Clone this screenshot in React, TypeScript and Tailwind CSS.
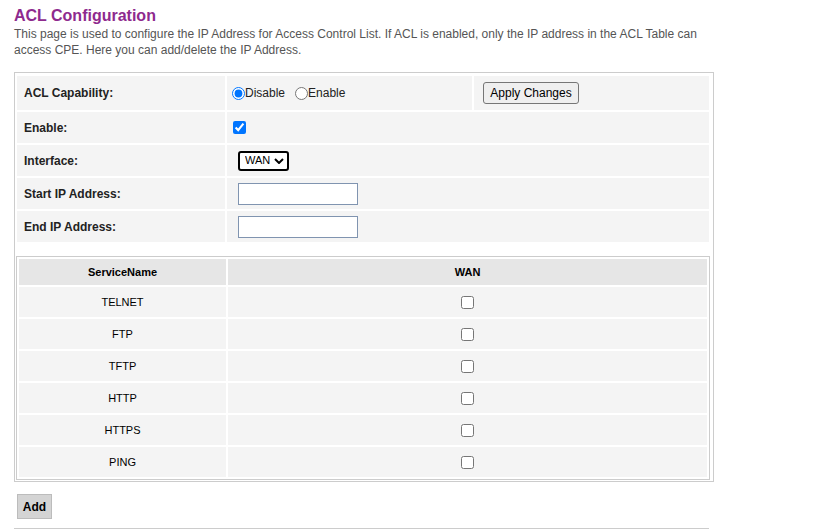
import React from "react";

const services = ["TELNET", "FTP", "TFTP", "HTTP", "HTTPS", "PING"];

export default function App() {
  return (
    <div className="min-h-screen bg-white pl-[14px] pt-[6px] font-['Liberation_Sans',Arial,sans-serif]">
      {/* Page heading */}
      <h1 className="text-[16px] leading-[20px] font-bold text-[#8e2a8e]">ACL Configuration</h1>
      <p className="w-[700px] text-[12px] leading-[16px] text-[#555]">
        This page is used to configure the IP Address for Access Control List. If ACL is enabled, only the IP address in
        the ACL Table can access CPE. Here you can add/delete the IP Address.
      </p>

      {/* Settings box */}
      <div className="mt-[14px] w-[700px] border border-[#cccccc] py-px">
        <table className="w-[696px] table-fixed border-separate border-spacing-[2px] text-[12px] text-[#222]">
          <colgroup>
            <col className="w-[208px]" />
            <col className="w-[245px]" />
            <col />
          </colgroup>
          <tbody>
            <tr>
              <td className="h-[34px] bg-[#f4f4f4] p-0 pl-[7px] font-bold">ACL Capability:</td>
              <td className="h-[34px] bg-[#f4f4f4] p-0">
                <div className="flex items-center">
                  <input type="radio" name="acl" defaultChecked className="m-0 ml-[5px] h-[13px] w-[13px]" />
                  <span>Disable</span>
                  <input type="radio" name="acl" className="m-0 ml-[10px] h-[13px] w-[13px]" />
                  <span>Enable</span>
                </div>
              </td>
              <td className="h-[34px] bg-[#f4f4f4] p-0 pl-[9px]">
                <button className="h-[22px] w-[96px] rounded-[3px] border border-[#767676] bg-[#efefef] text-[12px] text-black">
                  Apply Changes
                </button>
              </td>
            </tr>
            <tr>
              <td className="h-[31px] bg-[#f4f4f4] p-0 pl-[7px] font-bold">Enable:</td>
              <td colSpan={2} className="h-[31px] bg-[#f4f4f4] p-0">
                <div className="flex items-center">
                  <input type="checkbox" defaultChecked className="m-0 ml-[6px] h-[13px] w-[13px]" />
                </div>
              </td>
            </tr>
            <tr>
              <td className="h-[31px] bg-[#f4f4f4] p-0 pl-[7px] font-bold">Interface:</td>
              <td colSpan={2} className="h-[31px] bg-[#f4f4f4] p-0">
                <div className="relative ml-[11px] inline-block align-middle">
                  <select className="block h-[20px] w-[51px] appearance-none rounded-[3px] border-2 border-black bg-white pl-[5px] text-[11px] leading-none text-black outline-none">
                    <option>WAN</option>
                  </select>
                  <svg
                    className="pointer-events-none absolute right-[5px] top-[7px]"
                    width="10"
                    height="6"
                    viewBox="0 0 10 6"
                  >
                    <path d="M1 1l4 4 4-4" stroke="black" strokeWidth="2" fill="none" />
                  </svg>
                </div>
              </td>
            </tr>
            <tr>
              <td className="h-[31px] bg-[#f4f4f4] p-0 pl-[7px] font-bold">Start IP Address:</td>
              <td colSpan={2} className="h-[31px] bg-[#f4f4f4] p-0">
                <input
                  type="text"
                  className="ml-[11px] block h-[22px] w-[120px] border border-[#8094b0] bg-white px-1 text-[12px] outline-none"
                />
              </td>
            </tr>
            <tr>
              <td className="h-[31px] bg-[#f4f4f4] p-0 pl-[7px] font-bold">End IP Address:</td>
              <td colSpan={2} className="h-[31px] bg-[#f4f4f4] p-0">
                <input
                  type="text"
                  className="ml-[11px] block h-[22px] w-[120px] border border-[#8094b0] bg-white px-1 text-[12px] outline-none"
                />
              </td>
            </tr>
          </tbody>
        </table>

        {/* Service table */}
        <table className="mt-[12px] ml-px w-[694px] table-fixed border-separate border-spacing-[2px] border border-[#cccccc] text-[11px] text-black">
          <colgroup>
            <col className="w-[207px]" />
            <col />
          </colgroup>
          <thead>
            <tr>
              <th className="h-[26px] bg-[#e6e6e6] p-0 text-center font-bold">ServiceName</th>
              <th className="h-[26px] bg-[#e6e6e6] p-0 text-center font-bold">WAN</th>
            </tr>
          </thead>
          <tbody>
            {services.map((s) => (
              <tr key={s}>
                <td className="h-[30px] bg-[#f4f4f4] p-0 text-center">{s}</td>
                <td className="h-[30px] bg-[#f4f4f4] p-0">
                  <div className="flex items-center justify-center">
                    <input type="checkbox" className="m-0 h-[13px] w-[13px]" />
                  </div>
                </td>
              </tr>
            ))}
          </tbody>
        </table>
      </div>

      <button className="mt-[12px] ml-[3px] block h-[25px] w-[35px] border border-[#bcbcbc] bg-[#d4d4d4] text-[12px] font-bold text-black">
        Add
      </button>
      <div className="mt-[9px] h-px w-[695px] bg-[#cccccc]" />
    </div>
  );
}
